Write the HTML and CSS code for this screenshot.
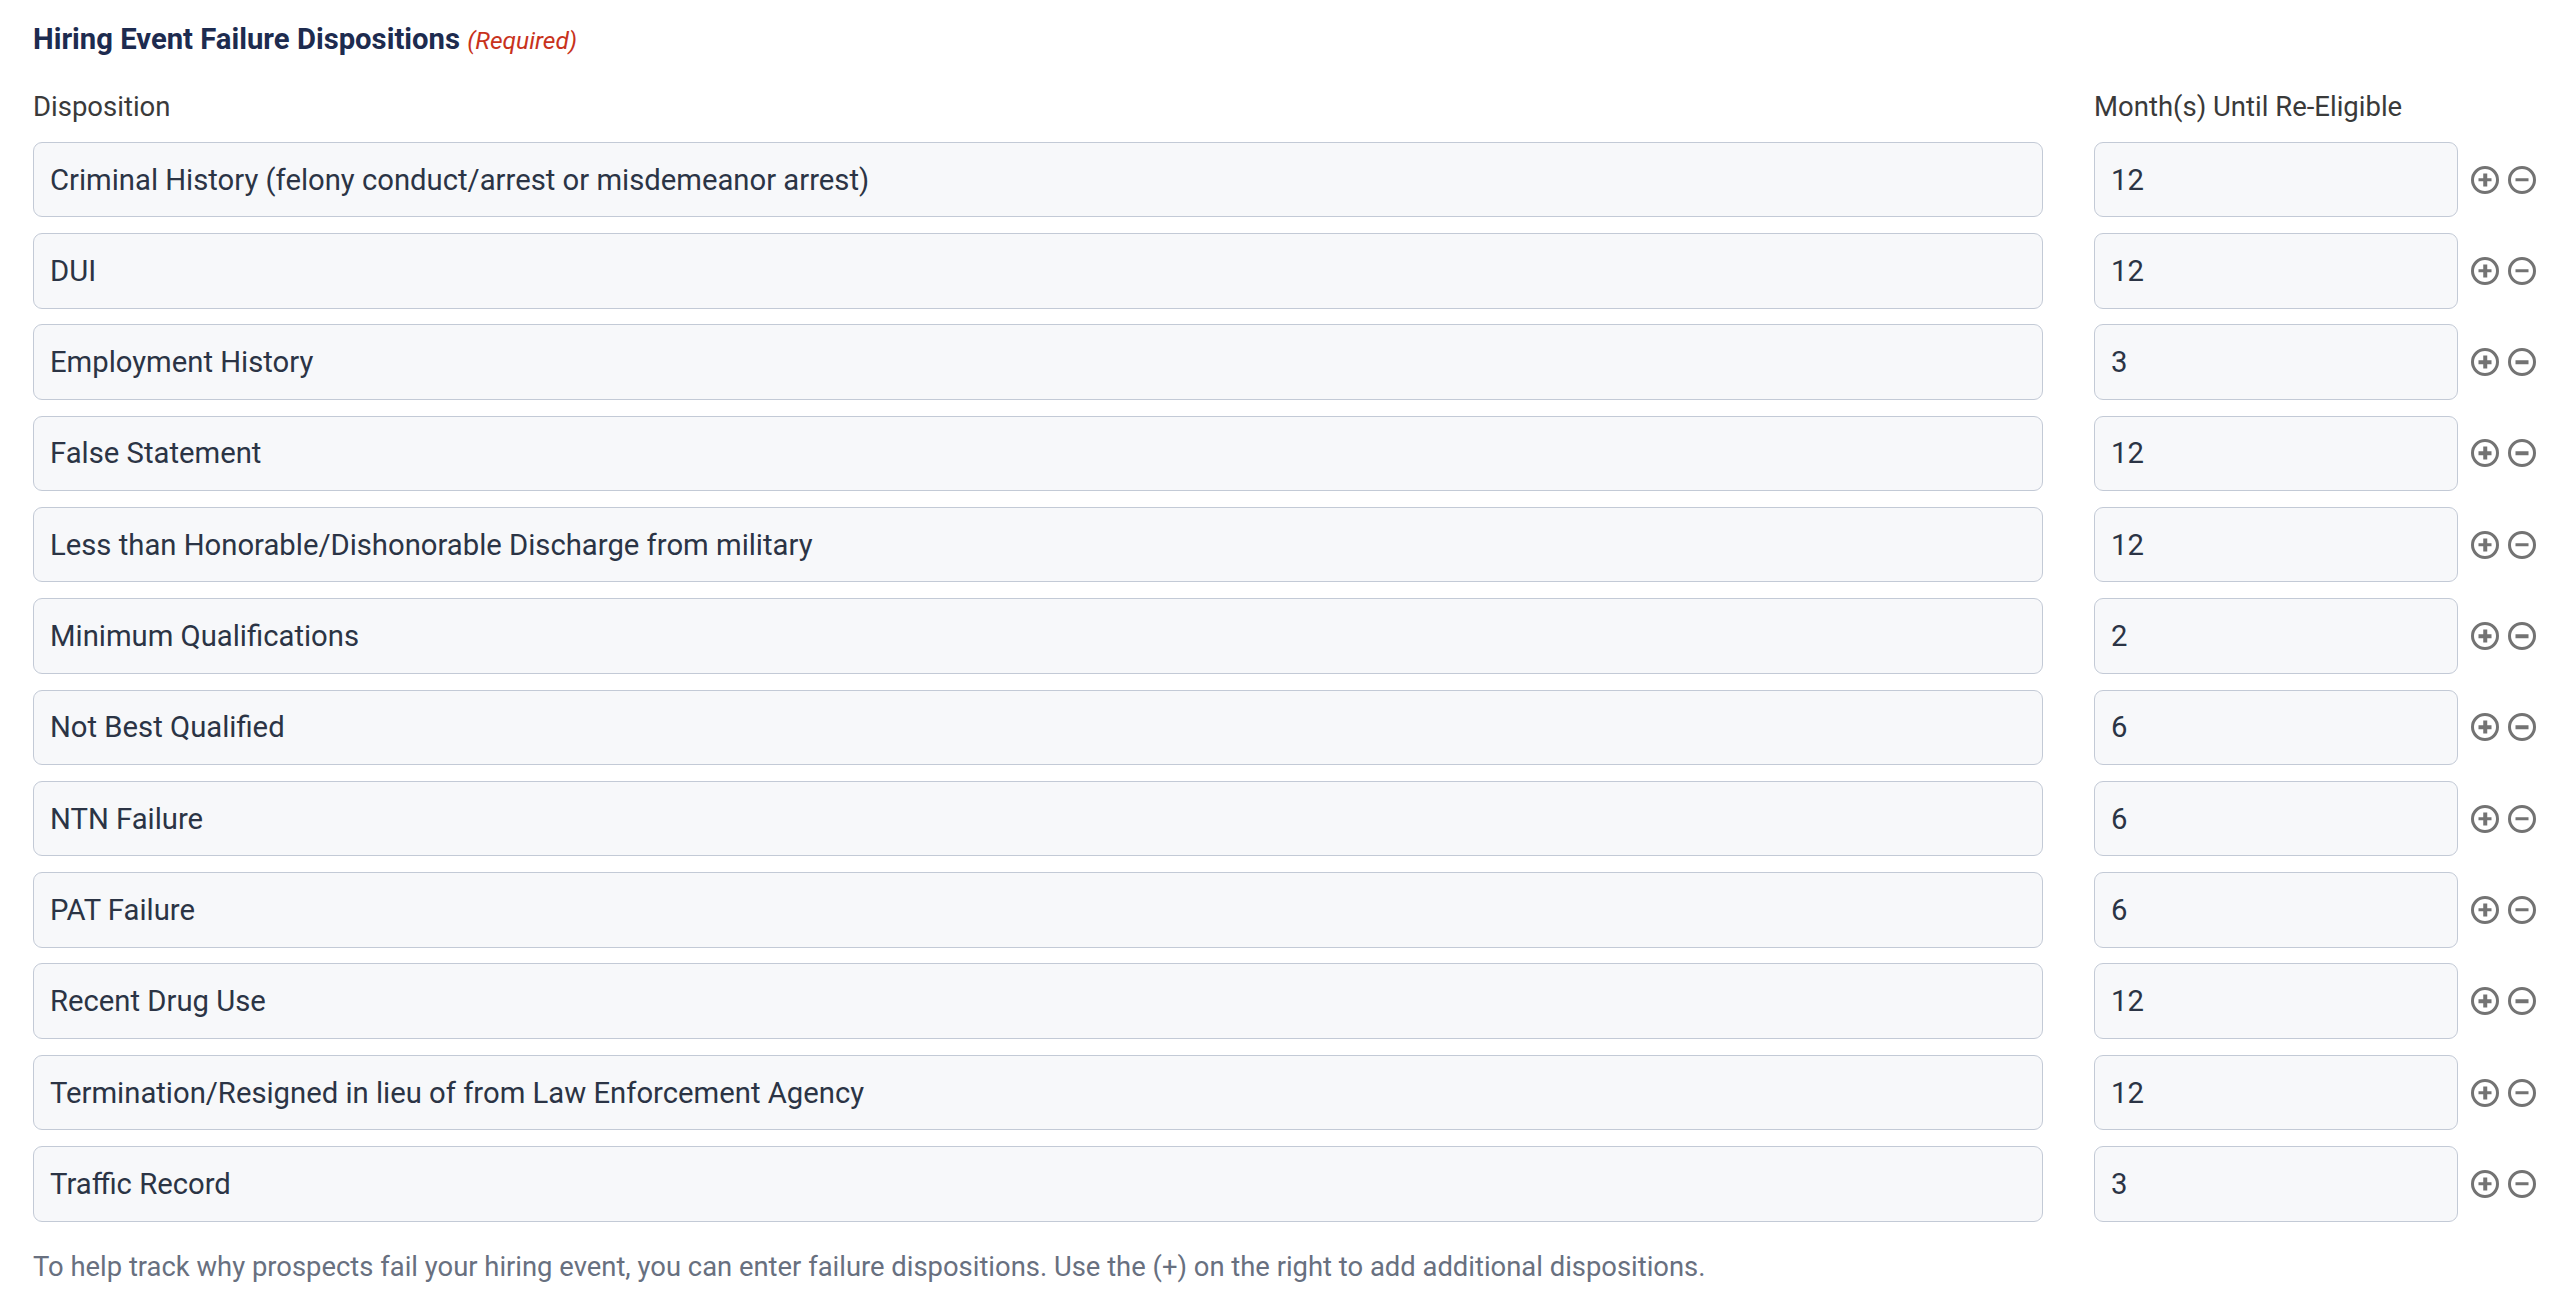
FILE: index.html
```html
<!DOCTYPE html>
<html lang="en">

<head>
    <meta charset="UTF-8">
    <title>Hiring Event Failure Dispositions</title>
    <link rel="stylesheet" href="styles.css">
</head>

<body>

    <div class="section">
        <h2 class="title">Hiring Event Failure Dispositions <span class="required">(Required)</span></h2>

        <div class="grid">
            <div class="col-label">Disposition</div>
            <div class="col-label">Month(s) Until Re-Eligible</div>
            <div></div>

            <div class="field">Criminal History (felony conduct/arrest or misdemeanor arrest)</div>
            <div class="field">12</div>
            <div class="actions"><span class="icon plus"></span><span class="icon minus"></span></div>

            <div class="field">DUI</div>
            <div class="field">12</div>
            <div class="actions"><span class="icon plus"></span><span class="icon minus"></span></div>

            <div class="field">Employment History</div>
            <div class="field">3</div>
            <div class="actions"><span class="icon plus"></span><span class="icon minus"></span></div>

            <div class="field">False Statement</div>
            <div class="field">12</div>
            <div class="actions"><span class="icon plus"></span><span class="icon minus"></span></div>

            <div class="field">Less than Honorable/Dishonorable Discharge from military</div>
            <div class="field">12</div>
            <div class="actions"><span class="icon plus"></span><span class="icon minus"></span></div>

            <div class="field">Minimum Qualifications</div>
            <div class="field">2</div>
            <div class="actions"><span class="icon plus"></span><span class="icon minus"></span></div>

            <div class="field">Not Best Qualified</div>
            <div class="field">6</div>
            <div class="actions"><span class="icon plus"></span><span class="icon minus"></span></div>

            <div class="field">NTN Failure</div>
            <div class="field">6</div>
            <div class="actions"><span class="icon plus"></span><span class="icon minus"></span></div>

            <div class="field">PAT Failure</div>
            <div class="field">6</div>
            <div class="actions"><span class="icon plus"></span><span class="icon minus"></span></div>

            <div class="field">Recent Drug Use</div>
            <div class="field">12</div>
            <div class="actions"><span class="icon plus"></span><span class="icon minus"></span></div>

            <div class="field">Termination/Resigned in lieu of from Law Enforcement Agency</div>
            <div class="field">12</div>
            <div class="actions"><span class="icon plus"></span><span class="icon minus"></span></div>

            <div class="field">Traffic Record</div>
            <div class="field">3</div>
            <div class="actions"><span class="icon plus"></span><span class="icon minus"></span></div>
        </div>

        <p class="help">To help track why prospects fail your hiring event, you can enter failure dispositions. Use the (+) on the right to add additional dispositions.</p>
    </div>

</body>

</html>
```

FILE: styles.css
```css
body {
    margin: 0;
    font-family: Roboto, 'Liberation Sans', sans-serif;
    background: #fff;
    color: #2b3445;
}

.section {
    padding: 21px 23px 0 33px;
}

.title {
    margin: 0;
    font-size: 29.25px;
    font-weight: 700;
    color: #1d2b4f;
    line-height: 36px;
}

.required {
    font-size: 24.5px;
    font-weight: 400;
    font-style: italic;
    color: #c8321c;
}

.grid {
    display: grid;
    grid-template-columns: 2010px 364px 66px;
    column-gap: 51px;
    row-gap: 15.8px;
    margin-top: 31.6px;
    align-items: center;
}

.col-label {
    font-size: 27.5px;
    color: #3a3a3a;
    line-height: 32px;
    margin-bottom: 3.4px;
}

.field {
    box-sizing: border-box;
    height: 75.5px;
    display: flex;
    align-items: center;
    padding: 0 16px;
    background: #f7f8fa;
    border: 1.5px solid #c3cad6;
    border-radius: 9px;
    font-size: 29.25px;
    color: #2b3445;
}

.actions {
    display: flex;
    gap: 9px;
    margin-left: -38px;
}

.icon {
    box-sizing: border-box;
    width: 28px;
    height: 28px;
    border: 3px solid #737373;
    border-radius: 50%;
    position: relative;
}

.icon::before,
.icon.plus::after {
    content: "";
    position: absolute;
    background: #737373;
    left: 50%;
    top: 50%;
    width: 13px;
    height: 3.5px;
    transform: translate(-50%, -50%);
}

.icon.plus::after {
    width: 3.5px;
    height: 13px;
}

.help {
    margin: 29px 0 0;
    font-size: 27.4px;
    color: #68707f;
}
```
